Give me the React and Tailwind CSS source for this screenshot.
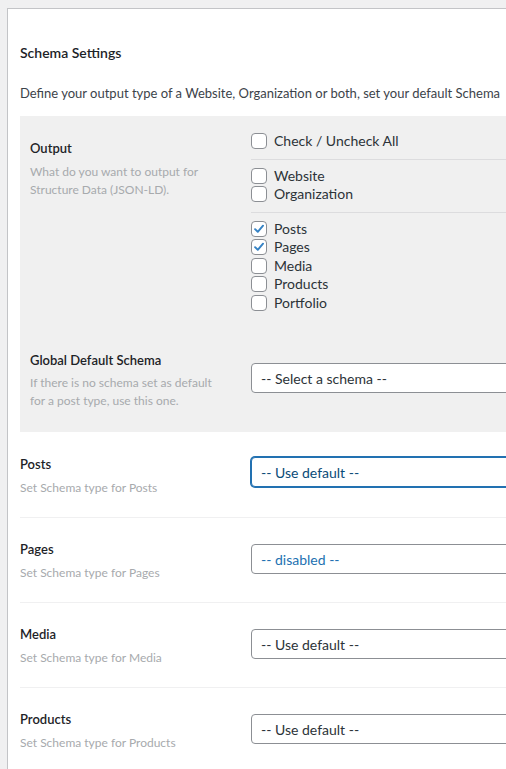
import React from 'react';

const font = { fontFamily: '"Lato", "Liberation Sans", sans-serif' };

const Check = ({ checked, label }) => (
    <div className="flex items-center h-[18.5px]">
        <span className="w-4 h-4 shrink-0 rounded-[4px] border border-[#8c8f94] bg-white flex items-center justify-center">
            {checked && (
                <svg viewBox="0 0 16 16" className="w-[14px] h-[14px]">
                    <path d="M3.5 8.2 L6.6 11.2 L12.6 4.2" fill="none" stroke="#3582c4" strokeWidth="2.2" strokeLinecap="round" strokeLinejoin="round" />
                </svg>
            )}
        </span>
        <span className="ml-[7px] text-[14px] text-[#2c3338] leading-[18px]">{label}</span>
    </div>
);

const Select = ({ value, focused, blue }) => (
    <div
        className={`h-[30px] w-[300px] shrink-0 rounded-[4px] bg-white flex items-center pl-[9px] text-[14px] ${
            focused
                ? 'border border-[#2271b1] shadow-[0_0_0_1px_#2271b1] text-[#0a4b78]'
                : 'border border-[#8c8f94] text-[#2c3338]'
        } ${blue ? 'text-[#2271b1]' : ''}`}
    >
        {value}
    </div>
);

const rows = [
    { label: 'Posts', value: '-- Use default --', focused: true },
    { label: 'Pages', value: '-- disabled --', blue: true },
    { label: 'Media', value: '-- Use default --' },
    { label: 'Products', value: '-- Use default --' },
];

export default function App() {
    return (
        <div className="min-h-screen w-[506px] overflow-hidden bg-[#f0f0f1] pt-2 pl-[7px]" style={font}>
            <div className="bg-white border-l border-t border-[#c3c4c7] pl-3 min-h-[761px] w-[700px]">
                <h2 className="pt-[34px] text-[14px] leading-5 font-semibold text-[#1d2327]">Schema Settings</h2>
                <p className="mt-5 text-[13px] leading-5 text-[#3c434a] whitespace-nowrap">
                    Define your output type of a Website, Organization or both, set your default Schema
                </p>

                {/* Gray settings block */}
                <div className="mt-[13px] bg-[#f0f0f0] pl-[10px]">
                    <div className="flex pb-[18px]">
                        <div className="w-[221px] shrink-0 pt-[22px]">
                            <div className="text-[13px] leading-5 font-semibold text-[#1d2327]">Output</div>
                            <div className="mt-[5px] text-[12px] leading-[18px] text-[#a7aaad] w-[180px]">
                                What do you want to output for Structure Data (JSON-LD).
                            </div>
                        </div>
                        <div className="flex-1 pt-4">
                            <Check label="Check / Uncheck All" />
                            <div className="mt-2 mb-[7px] h-px bg-[#dcdcde]" />
                            <Check label="Website" />
                            <Check label="Organization" />
                            <div className="mt-2 mb-[7px] h-px bg-[#dcdcde]" />
                            <Check label="Posts" checked />
                            <Check label="Pages" checked />
                            <Check label="Media" />
                            <Check label="Products" />
                            <Check label="Portfolio" />
                        </div>
                    </div>
                    <div className="flex pb-[22px]">
                        <div className="w-[221px] shrink-0 pt-5">
                            <div className="text-[13px] leading-5 font-semibold text-[#1d2327]">Global Default Schema</div>
                            <div className="mt-[4px] text-[12px] leading-[18px] text-[#a7aaad] w-[190px]">
                                If there is no schema set as default for a post type, use this one.
                            </div>
                        </div>
                        <div className="pt-[33px]">
                            <Select value="-- Select a schema --" />
                        </div>
                    </div>
                </div>

                {/* Post type rows */}
                {rows.map((r, i) => (
                    <div key={r.label} className={`flex pb-5 ${i > 0 ? 'border-t border-[#f0f0f1]' : ''}`}>
                        <div className={`w-[231px] shrink-0 ${i === 0 ? 'pt-[22px]' : 'pt-[21px]'}`}>
                            <div className="text-[13px] leading-5 font-semibold text-[#1d2327]">{r.label}</div>
                            <div className="mt-[5px] text-[12px] leading-[18px] text-[#a7aaad]">Set Schema type for {r.label}</div>
                        </div>
                        <div className={i === 0 ? 'pt-[25px]' : 'pt-[26px]'}>
                            <Select value={r.value} focused={r.focused} blue={r.blue} />
                        </div>
                    </div>
                ))}
            </div>
        </div>
    );
}
